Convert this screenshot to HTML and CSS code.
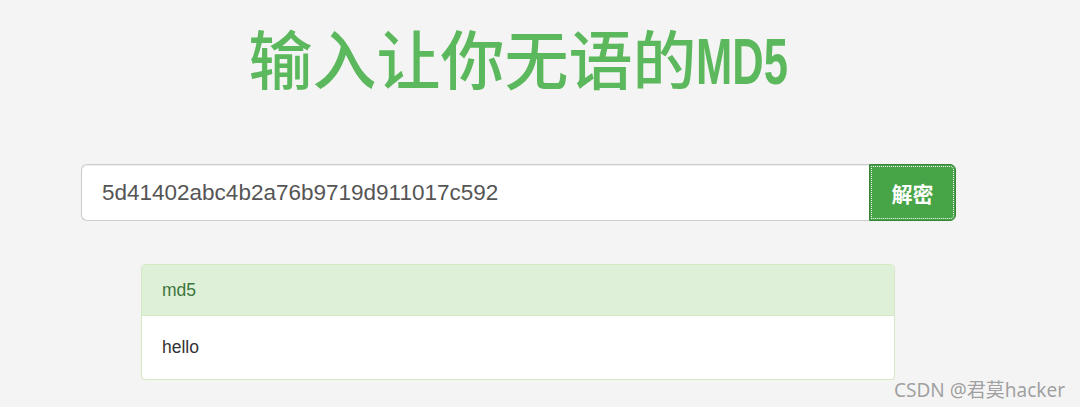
FILE: index.html
```html
<!DOCTYPE html>
<html lang="zh-CN">
<head>
  <meta charset="UTF-8">
  <meta name="viewport" content="width=device-width, initial-scale=1.0">
  <title>输入让你无语的MD5</title>
  <link rel="stylesheet" href="styles.css">
</head>
<body>
  <div class="main">
    <h1 class="title">输入让你无语的<span class="latin">MD5</span></h1>

    <form class="search" onsubmit="return false;">
      <input class="hash" type="text" value="5d41402abc4b2a76b9719d911017c592">
      <button class="btn" type="submit">解密</button>
    </form>

    <div class="panel">
      <div class="panel-heading">md5</div>
      <div class="panel-body">hello</div>
    </div>
  </div>

  <div class="mark">CSDN @君莫hacker</div>
</body>
</html>
```

FILE: styles.css
```css
body {
  margin: 0;
  background-color: #f4f4f4;
  font-family: "Liberation Sans", Arial, "Noto Sans CJK SC", sans-serif;
  color: #333;
}

.main {
  width: 875px;
  margin-left: 81px;
}

.title {
  margin: 0;
  padding-top: 18px;
  height: 164px;
  box-sizing: border-box;
  text-align: center;
  color: #5cb85c;
  font-family: "Noto Sans CJK SC", sans-serif;
  font-size: 64px;
  font-weight: 500;
  line-height: 76px;
}

/* half-width latin, like the heiti fallback */
.title .latin {
  display: inline-block;
  font-family: "Liberation Sans", Arial, sans-serif;
  font-weight: 700;
  transform: scaleX(0.68);
  transform-origin: left center;
  margin-right: -43px;
}

.search {
  display: flex;
  height: 57px;
  margin: 0;
}

.hash {
  flex: 1;
  margin: 0;
  padding: 0 20px;
  border: 1px solid #ccc;
  border-right: none;
  border-radius: 6px 0 0 6px;
  background: #fff;
  color: #555;
  font-family: "Liberation Sans", Arial, sans-serif;
  font-size: 22.5px;
  outline: none;
  box-shadow: inset 0 1px 1px rgba(0, 0, 0, 0.075);
}

.btn {
  width: 87px;
  margin: 0;
  padding: 0;
  border: 1px solid #398439;
  border-radius: 0 6px 6px 0;
  background-color: #47a447;
  color: #fff;
  font-family: "Noto Sans CJK SC", sans-serif;
  font-size: 21px;
  font-weight: 700;
  outline: 1px dotted #fff;
  outline-offset: -3px;
  cursor: pointer;
}

.panel {
  margin: 43px 61px 0 60px;
  border: 1px solid #d6e9c6;
  border-radius: 4px;
  background: #fff;
  overflow: hidden;
  box-shadow: 0 1px 1px rgba(0, 0, 0, 0.05);
}

.panel-heading {
  height: 50px;
  padding: 0 20px;
  line-height: 50px;
  background-color: #dff0d8;
  border-bottom: 1px solid #d6e9c6;
  color: #3c763d;
  font-size: 17.5px;
}

.panel-body {
  height: 63px;
  padding: 0 20px;
  line-height: 63px;
  font-size: 17.5px;
}

.mark {
  position: absolute;
  right: 15px;
  top: 377px;
  color: #a0a0a0;
  font-family: "Noto Sans", "Noto Sans CJK SC", sans-serif;
  font-size: 19px;
  line-height: 26px;
  text-shadow: 0 0 1px #fff;
}
```
